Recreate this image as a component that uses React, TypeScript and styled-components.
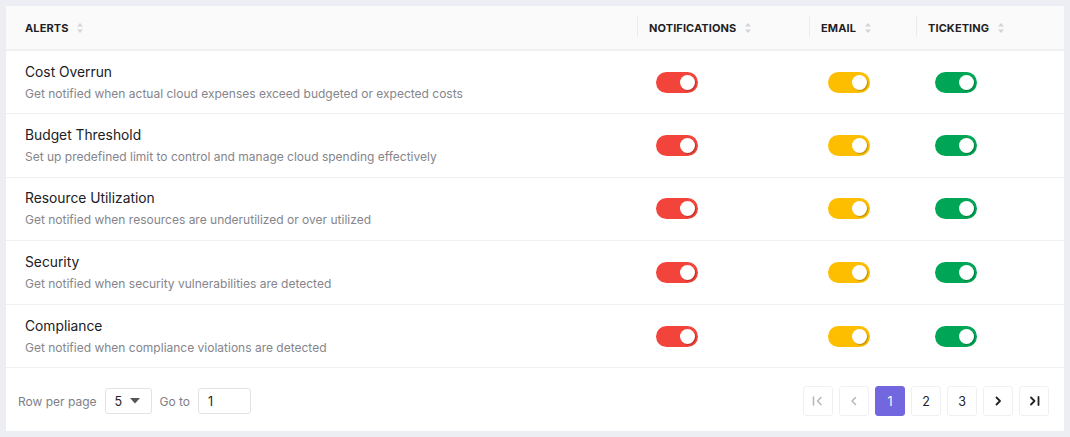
import React from "react";
import styled, { createGlobalStyle } from "styled-components";

const GlobalStyle = createGlobalStyle`
  html, body {
    margin: 0;
    padding: 0;
    background: #eceef3;
    font-family: "Inter", "Noto Sans", sans-serif;
  }
`;

type Alert = { title: string; description: string };

const alerts: Alert[] = [
  { title: "Cost Overrun", description: "Get notified when actual cloud expenses exceed budgeted or expected costs" },
  { title: "Budget Threshold", description: "Set up predefined limit to control and manage cloud spending effectively" },
  { title: "Resource Utilization", description: "Get notified when resources are underutilized or over utilized" },
  { title: "Security", description: "Get notified when security vulnerabilities are detected" },
  { title: "Compliance", description: "Get notified when compliance violations are detected" },
];

const SortIcon = () => (
  <svg width="8" height="12" viewBox="0 0 8 12">
    <path d="M4 1 L7 4.5 H1 Z" fill="#d4d4d8" />
    <path d="M4 11 L7 7.5 H1 Z" fill="#d4d4d8" />
  </svg>
);

const ChevronLeft = ({ color }: { color: string }) => (
  <svg width="12" height="12" viewBox="0 0 12 12" fill="none" stroke={color} strokeWidth="1.6" strokeLinecap="round" strokeLinejoin="round">
    <path d="M7.5 2.5 L4 6 L7.5 9.5" />
  </svg>
);

const ChevronRight = ({ color }: { color: string }) => (
  <svg width="12" height="12" viewBox="0 0 12 12" fill="none" stroke={color} strokeWidth="1.8" strokeLinecap="round" strokeLinejoin="round">
    <path d="M4.5 2.5 L8 6 L4.5 9.5" />
  </svg>
);

const FirstIcon = ({ color }: { color: string }) => (
  <svg width="14" height="12" viewBox="0 0 14 12" fill="none" stroke={color} strokeWidth="1.6" strokeLinecap="round" strokeLinejoin="round">
    <path d="M2.5 2 V10" />
    <path d="M10 2.5 L6.5 6 L10 9.5" />
  </svg>
);

const LastIcon = ({ color }: { color: string }) => (
  <svg width="14" height="12" viewBox="0 0 14 12" fill="none" stroke={color} strokeWidth="1.8" strokeLinecap="round" strokeLinejoin="round">
    <path d="M11.5 2 V10" />
    <path d="M4 2.5 L7.5 6 L4 9.5" />
  </svg>
);

const CaretDown = () => (
  <svg width="10" height="6" viewBox="0 0 10 6">
    <path d="M0 0 H10 L5 5.5 Z" fill="#555" />
  </svg>
);

export default function App() {
  return (
    <>
      <GlobalStyle />
      <Page>
        <Card>
          <Table>
            <colgroup>
              <col style={{ width: 631 }} />
              <col style={{ width: 172 }} />
              <col style={{ width: 107 }} />
              <col />
            </colgroup>
            <thead>
              <tr>
                <HeadCell>
                  <HeadLabel>ALERTS <SortIcon /></HeadLabel>
                </HeadCell>
                <HeadCell $divider>
                  <HeadLabel>NOTIFICATIONS <SortIcon /></HeadLabel>
                </HeadCell>
                <HeadCell $divider>
                  <HeadLabel>EMAIL <SortIcon /></HeadLabel>
                </HeadCell>
                <HeadCell $divider>
                  <HeadLabel>TICKETING <SortIcon /></HeadLabel>
                </HeadCell>
              </tr>
            </thead>
            <tbody>
              {alerts.map((a) => (
                <Row key={a.title}>
                  <Cell>
                    <Title>{a.title}</Title>
                    <Description>{a.description}</Description>
                  </Cell>
                  <ToggleCell>
                    <Toggle $color="#f2443a"><Thumb /></Toggle>
                  </ToggleCell>
                  <ToggleCell>
                    <Toggle $color="#fdbe00"><Thumb /></Toggle>
                  </ToggleCell>
                  <ToggleCell>
                    <Toggle $color="#00a656"><Thumb /></Toggle>
                  </ToggleCell>
                </Row>
              ))}
            </tbody>
          </Table>
          <Footer>
            <FooterLeft>
              <FooterLabel>Row per page</FooterLabel>
              <SelectBox>
                <span>5</span>
                <CaretDown />
              </SelectBox>
              <FooterLabel>Go to</FooterLabel>
              <GoInput>1</GoInput>
            </FooterLeft>
            <Pager>
              <PageButton $disabled><FirstIcon color="#b8b8bd" /></PageButton>
              <PageButton $disabled><ChevronLeft color="#b8b8bd" /></PageButton>
              <PageButton $active>1</PageButton>
              <PageButton>2</PageButton>
              <PageButton>3</PageButton>
              <PageButton><ChevronRight color="#222" /></PageButton>
              <PageButton><LastIcon color="#222" /></PageButton>
            </Pager>
          </Footer>
        </Card>
      </Page>
    </>
  );
}

const Page = styled.div`
  padding: 6px;
  width: 1058px;
`;

const Card = styled.div`
  background: #ffffff;
  width: 1058px;
  height: 425px;
  display: flex;
  flex-direction: column;
`;

const Table = styled.table`
  width: 100%;
  border-collapse: collapse;
  table-layout: fixed;
`;

const HeadCell = styled.th<{ $divider?: boolean }>`
  height: 44px;
  box-sizing: border-box;
  background: #fafafa;
  border-bottom: 2px solid #f0f0f2;
  padding: 0 0 3px ${(p) => (p.$divider ? 12 : 19)}px;
  text-align: left;
  position: relative;
  &::before {
    content: "";
    display: ${(p) => (p.$divider ? "block" : "none")};
    position: absolute;
    left: 0;
    top: 10px;
    bottom: 12px;
    width: 1px;
    background: #ececef;
  }
`;

const HeadLabel = styled.span`
  display: inline-flex;
  align-items: center;
  gap: 8px;
  font-size: 11px;
  font-weight: 700;
  color: #1f1f24;
  letter-spacing: 0.1px;
`;

const Row = styled.tr`
  height: 63.6px;
  border-bottom: 1px solid #efeff2;
`;

const Cell = styled.td`
  padding: 0 0 0 19px;
  vertical-align: middle;
`;

const ToggleCell = styled.td`
  padding: 0 0 0 19px;
  vertical-align: middle;
`;

const Title = styled.div`
  font-size: 13.8px;
  color: #202024;
  margin-bottom: 6px;
`;

const Description = styled.div`
  font-size: 12px;
  color: #85858c;
`;

const Toggle = styled.div<{ $color: string }>`
  width: 42px;
  height: 21px;
  border-radius: 11px;
  background: ${(p) => p.$color};
  display: flex;
  align-items: center;
  justify-content: flex-end;
  padding-right: 3px;
  box-sizing: border-box;
`;

const Thumb = styled.div`
  width: 15px;
  height: 15px;
  border-radius: 50%;
  background: #ffffff;
  box-shadow: 1px 1px 1px rgba(0, 0, 0, 0.25);
`;

const Footer = styled.div`
  flex: 1;
  display: flex;
  align-items: center;
  justify-content: space-between;
  padding: 3px 15px 0 12px;
`;

const FooterLeft = styled.div`
  display: flex;
  align-items: center;
  gap: 8px;
`;

const FooterLabel = styled.span`
  font-size: 12px;
  color: #808087;
`;

const SelectBox = styled.div`
  width: 47px;
  height: 26px;
  box-sizing: border-box;
  border: 1px solid #e3e3e6;
  border-radius: 3px;
  display: flex;
  align-items: center;
  justify-content: space-between;
  padding: 0 11px 0 9px;
  font-size: 12.5px;
  color: #222;
`;

const GoInput = styled.div`
  width: 53px;
  height: 26px;
  box-sizing: border-box;
  border: 1px solid #e3e3e6;
  border-radius: 3px;
  display: flex;
  align-items: center;
  padding: 0 9px;
  font-size: 12.5px;
  color: #222;
`;

const Pager = styled.div`
  display: flex;
  align-items: center;
  gap: 6px;
`;

const PageButton = styled.div<{ $active?: boolean; $disabled?: boolean }>`
  width: 30px;
  height: 30px;
  box-sizing: border-box;
  border-radius: 3px;
  border: 1px solid ${(p) => (p.$active ? "#7367e0" : "#f0f0f2")};
  background: ${(p) => (p.$active ? "#7367e0" : "#ffffff")};
  color: ${(p) => (p.$active ? "#ffffff" : "#222")};
  display: flex;
  align-items: center;
  justify-content: center;
  font-size: 12.5px;
`;
